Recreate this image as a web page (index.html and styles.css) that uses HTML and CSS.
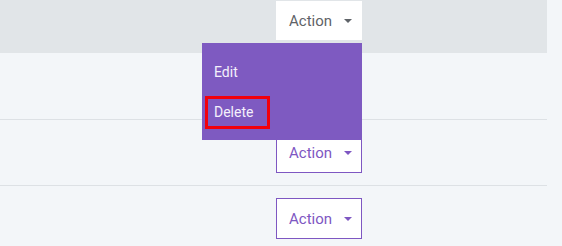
FILE: index.html
```html
<!DOCTYPE html>
<html lang="en">
<head>
  <meta charset="UTF-8">
  <meta name="viewport" content="width=device-width, initial-scale=1.0">
  <title>Action menu</title>
  <link rel="stylesheet" href="styles.css">
</head>
<body>

<div class="table">
  <div class="thead">
    <div class="spacer"></div>
    <div class="dropdown">
      <button class="btn btn-light">Action</button>
      <div class="menu">
        <a class="menu-item" href="#">Edit</a>
        <a class="menu-item focus" href="#"><span>Delete</span></a>
      </div>
    </div>
  </div>
  <div class="row">
    <div class="spacer"></div>
    <button class="btn btn-outline">Action</button>
  </div>
  <div class="row">
    <div class="spacer"></div>
    <button class="btn btn-outline">Action</button>
  </div>
  <div class="row">
    <div class="spacer"></div>
    <button class="btn btn-outline">Action</button>
  </div>
</div>

</body>
</html>
```

FILE: styles.css
```css
body {
  margin: 0;
  padding: 0;
  background-color: #f3f6f9;
  font-family: Roboto, 'Liberation Sans', sans-serif;
}
.table {
  width: 547px;
}
.thead {
  display: grid;
  grid-template-columns: 276px 86px 1fr;
  height: 53px;
  padding-top: 1px;
  box-sizing: border-box;
  background-color: #e1e5e8;
  align-items: start;
}
.row {
  display: grid;
  grid-template-columns: 276px 86px 1fr;
  height: 66px;
  align-items: center;
  border-top: 1px solid #dde1e5;
  box-sizing: border-box;
}
.thead + .row {
  border-top: none;
}
.dropdown {
  position: relative;
}
.btn {
  display: flex;
  align-items: center;
  gap: 12px;
  width: 86px;
  height: 41px;
  padding: 0 12px;
  box-sizing: border-box;
  font-family: inherit;
  font-size: 15px;
  background: #fff;
  cursor: pointer;
}
.btn::after {
  content: '';
  border-top: 4px solid currentColor;
  border-left: 4px solid transparent;
  border-right: 4px solid transparent;
}
.btn-light {
  height: 39px;
  color: #5f6368;
  border: 1px solid #fff;
}
.btn-outline {
  color: #7e57c2;
  border: 1px solid #7e57c2;
}
.menu {
  position: absolute;
  top: 42px;
  left: -74px;
  width: 160px;
  padding: 8px 0 7px;
  background-color: #7e5ac1;
  z-index: 10;
}
.menu-item {
  display: flex;
  align-items: center;
  height: 41px;
  padding-left: 12px;
  color: #f4f0fb;
  font-size: 14px;
  text-decoration: none;
}
.menu-item.focus span {
  display: inline-block;
  margin-left: -9px;
  padding: 0 14px 0 6px;
  line-height: 27px;
  border: 3px solid #f2000c;
}
```
